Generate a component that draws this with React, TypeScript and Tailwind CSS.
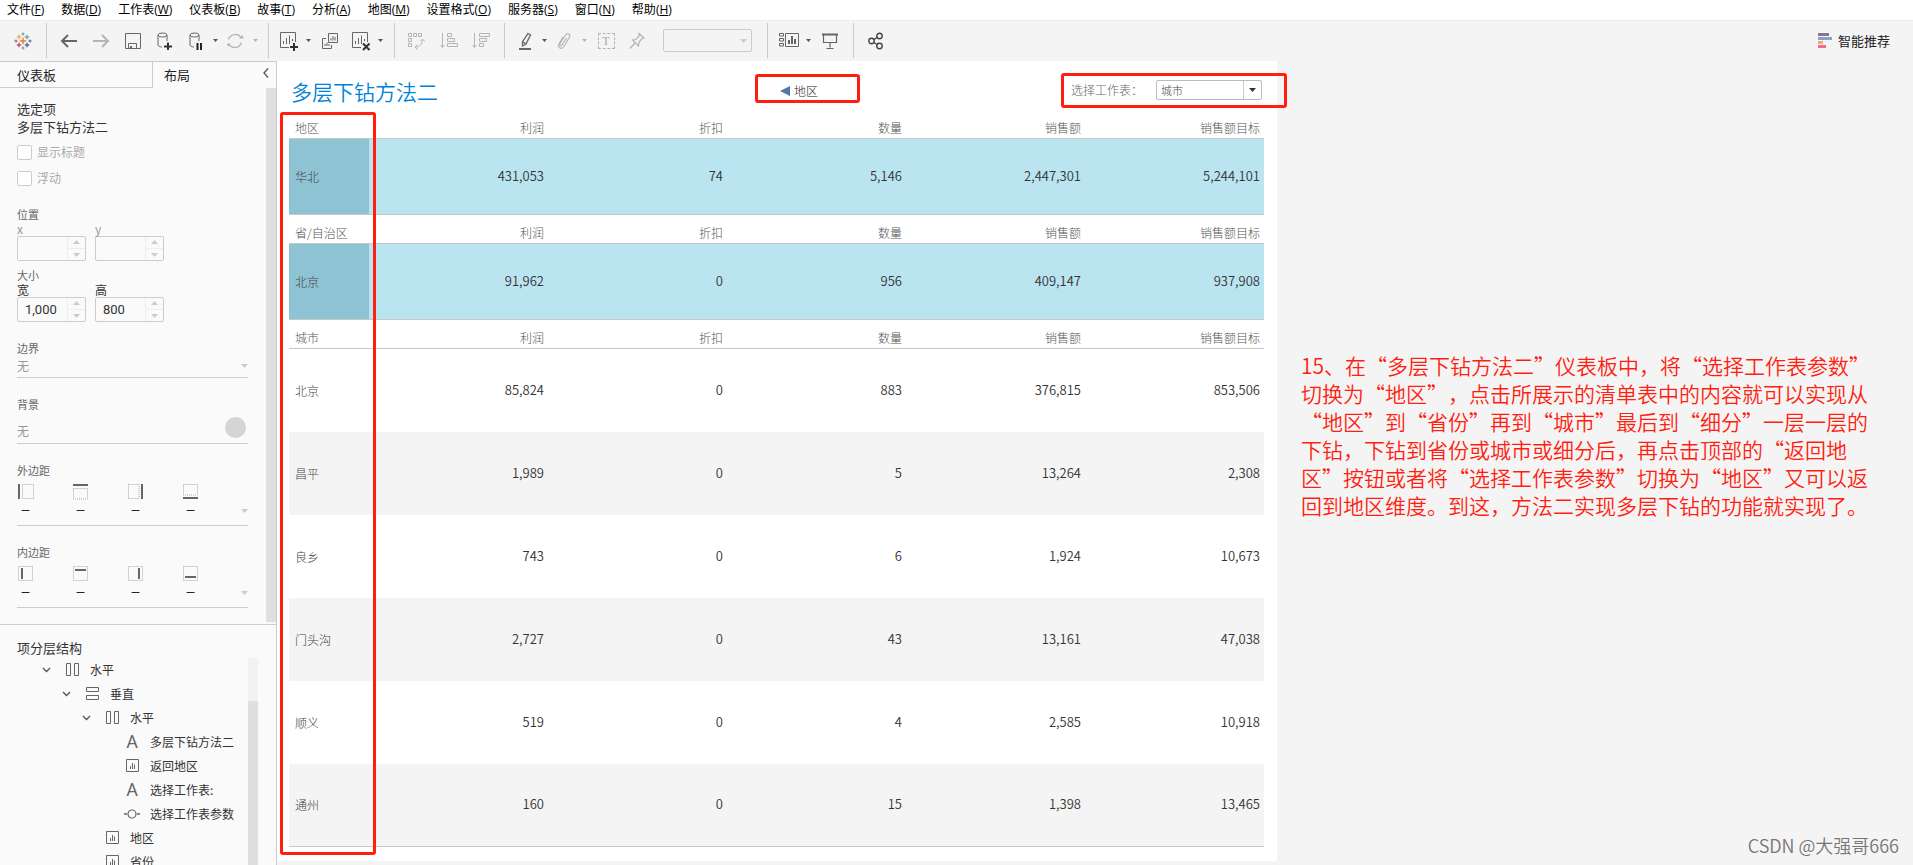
import React from "react";

const MENUS = [
    { label: "文件", key: "F" },
    { label: "数据", key: "D" },
    { label: "工作表", key: "W" },
    { label: "仪表板", key: "B" },
    { label: "故事", key: "T" },
    { label: "分析", key: "A" },
    { label: "地图", key: "M" },
    { label: "设置格式", key: "O" },
    { label: "服务器", key: "S" },
    { label: "窗口", key: "N" },
    { label: "帮助", key: "H" },
];

const MEASURES = ["利润", "折扣", "数量", "销售额", "销售额目标"];

type Row = { name: string; values: string[] };

const REGION_ROWS: Row[] = [{ name: "华北", values: ["431,053", "74", "5,146", "2,447,301", "5,244,101"] }];
const PROVINCE_ROWS: Row[] = [{ name: "北京", values: ["91,962", "0", "956", "409,147", "937,908"] }];
const CITY_ROWS: Row[] = [
    { name: "北京", values: ["85,824", "0", "883", "376,815", "853,506"] },
    { name: "昌平", values: ["1,989", "0", "5", "13,264", "2,308"] },
    { name: "良乡", values: ["743", "0", "6", "1,924", "10,673"] },
    { name: "门头沟", values: ["2,727", "0", "43", "13,161", "47,038"] },
    { name: "顺义", values: ["519", "0", "4", "2,585", "10,918"] },
    { name: "通州", values: ["160", "0", "15", "1,398", "13,465"] },
];

type TreeIcon = "horizontal" | "vertical" | "text" | "sheet" | "parameter";

const TREE: { label: string; icon: TreeIcon; indent: string; open?: boolean }[] = [
    { label: "水平", icon: "horizontal", indent: "pl-[23px]", open: true },
    { label: "垂直", icon: "vertical", indent: "pl-[43px]", open: true },
    { label: "水平", icon: "horizontal", indent: "pl-[63px]", open: true },
    { label: "多层下钻方法二", icon: "text", indent: "pl-[83px]" },
    { label: "返回地区", icon: "sheet", indent: "pl-[83px]" },
    { label: "选择工作表:", icon: "text", indent: "pl-[83px]" },
    { label: "选择工作表参数", icon: "parameter", indent: "pl-[83px]" },
    { label: "地区", icon: "sheet", indent: "pl-[63px]" },
    { label: "省份", icon: "sheet", indent: "pl-[63px]" },
];

const Svg = ({ children, className = "text-[#666]", size = 18 }: { children: React.ReactNode; className?: string; size?: number }) => (
    <svg width={size} height={size} viewBox={`0 0 ${size} ${size}`} fill="none" stroke="currentColor" className={`shrink-0 ${className}`}>
        {children}
    </svg>
);

const Caret = ({ className = "text-[#666]" }: { className?: string }) => (
    <svg width="7" height="4" viewBox="0 0 7 4" className={`shrink-0 ${className}`} fill="currentColor">
        <path d="M0 0h7L3.5 4z" />
    </svg>
);

const Tool = ({ name, children }: { name: string; children: React.ReactNode }) => (
    <button type="button" aria-label={name} className="flex h-8 w-8 items-center justify-center">
        {children}
    </button>
);

const SplitTool = ({ name, dim, children }: { name: string; dim?: boolean; children: React.ReactNode }) => (
    <div className="flex h-8 w-10">
        <button type="button" aria-label={name} className="flex w-[30px] items-center justify-center">
            {children}
        </button>
        <button type="button" aria-label={`${name}选项`} className="flex w-[9px] items-center justify-center">
            <svg width="5" height="3" viewBox="0 0 5 3" fill="currentColor" className={dim ? "text-[#b4b4b4]" : "text-[#555]"}>
                <path d="M0 0h5L2.5 3z" />
            </svg>
        </button>
    </div>
);

const LogoCross = ({ x, y, r, color }: { x: number; y: number; r: number; color: string }) => (
    <path d={`M${x - r} ${y}h${2 * r}M${x} ${y - r}v${2 * r}`} stroke={color} strokeWidth={r > 2.6 ? 1.4 : 1.1} />
);

const Logo = () => (
    <Svg>
        <LogoCross x={9} y={9} r={3.2} color="#eb7a2c" />
        <LogoCross x={5} y={5} r={2.3} color="#e8a33d" />
        <LogoCross x={13} y={5} r={2.3} color="#5b8f9e" />
        <LogoCross x={5} y={13} r={2.3} color="#c8233f" />
        <LogoCross x={13} y={13} r={2.3} color="#1f4b83" />
        <LogoCross x={9} y={2} r={1.6} color="#6f95a8" />
        <LogoCross x={9} y={16} r={1.6} color="#7a86b4" />
        <LogoCross x={2} y={9} r={1.6} color="#8a5f94" />
        <LogoCross x={16} y={9} r={1.6} color="#4f62a0" />
    </Svg>
);

const Toolbar = () => (
    <div className="flex h-[41px] shrink-0 items-center border-t border-[#ececec] bg-[#f4f4f4] pb-px">
        <div className="flex h-[35px] w-[47px] items-center justify-center border-r border-[#ccc]">
            <Logo />
        </div>
        <div className="flex h-[35px] items-center border-r border-[#ccc] pr-[7px] pl-[6px]">
            <Tool name="撤消">
                <Svg><path d="M17 9H2M8 3L2 9l6 6" strokeWidth="2" /></Svg>
            </Tool>
            <Tool name="重做">
                <Svg className="text-[#b4b4b4]"><path d="M1 9h15M10 3l6 6-6 6" strokeWidth="2" /></Svg>
            </Tool>
            <Tool name="保存">
                <Svg>
                    <path d="M1.5 1.5h15v15h-15z" />
                    <path d="M4.5 16.5v-5h8v5" />
                    <path d="M7 14v3" strokeWidth="2" />
                </Svg>
            </Tool>
            <Tool name="新建数据源">
                <Svg>
                    <ellipse cx="6.5" cy="3" rx="4.5" ry="2" />
                    <path d="M2 3v10c0 1.200 2 2 4 2M11 3v6" />
                    <path d="M8 14.500h8M12 10.500v8" className="text-[#333]" strokeWidth="2" />
                </Svg>
            </Tool>
            <SplitTool name="暂停自动更新">
                <Svg>
                    <ellipse cx="7.500" cy="3" rx="4.500" ry="2" />
                    <path d="M3 3v10c0 1.200 2 2 4 2M12 3v6" />
                    <path d="M10.500 11v7M14 11v7" className="text-[#222]" strokeWidth="2" />
                </Svg>
            </SplitTool>
            <SplitTool name="运行更新" dim>
                <Svg className="text-[#b4b4b4]">
                    <path d="M1.500 7.500A7 7 0 0 1 14 5.500M14.500 10.500A7 7 0 0 1 2 12.500" strokeWidth="1.300" />
                    <path d="M12 6.500h4.500L15.500 3z M4 11.500H0l1 3.500z" fill="currentColor" stroke="none" />
                </Svg>
            </SplitTool>
        </div>
        <div className="flex h-[35px] items-center border-r border-[#ccc] pr-2 pl-[5px]">
            <SplitTool name="新建工作表">
                <Svg size={20}>
                    <path d="M10 16.500H1.500v-15h15V11" />
                    <path d="M4.500 13V10M7.500 13V7M10.500 13V4.500M13.500 10V8" />
                    <path d="M11 16h8M15 12v8" className="text-[#333]" strokeWidth="2" />
                </Svg>
            </SplitTool>
            <Tool name="复制">
                <Svg>
                    <path d="M7.500 1.500h9v9h-9z" />
                    <path d="M5 6.500H1.500v10h9V13" />
                    <path d="M10 8.500V6M12 8.500V4M14 8.500V5M4 14v-2M6 14v-3.500M8 14v-2" />
                </Svg>
            </Tool>
            <SplitTool name="清除工作表">
                <Svg size={20}>
                    <path d="M10 16.500H1.500v-15h15V11" />
                    <path d="M4.500 13V10M7.500 13V7M10.500 13V4.500M13.500 10V8" />
                    <path d="M12 12.500l6.500 6.500M18.500 12.500L12 19" className="text-[#333]" strokeWidth="2" />
                </Svg>
            </SplitTool>
        </div>
        <div className="flex h-[35px] items-center border-r border-[#ccc] pr-[7px] pl-[6px]">
            <Tool name="交换行和列">
                <Svg className="text-[#b4b4b4]">
                    <path d="M.5 1.500h3v3h-3zM5.500 1.500h3v3h-3zM10.500 1.500h3v3h-3zM.5 6.500h3v3h-3zM.5 11.500h3v3h-3z" />
                    <path d="M14.500 8c0 4-2.500 7-7 7M12 9.500L14.500 7 17 9.500M9.500 12.500L7 15l2.500 2.500" />
                </Svg>
            </Tool>
            <Tool name="升序排序">
                <Svg className="text-[#b4b4b4]">
                    <path d="M2.500 1v14M.5 13l2 2.500 2-2.500M7.500 1.500h4v3h-4zM7.500 6.500h7v3h-7zM7.500 11.500h10v3h-10z" />
                </Svg>
            </Tool>
            <Tool name="降序排序">
                <Svg className="text-[#b4b4b4]">
                    <path d="M2.500 1v14M.5 13l2 2.500 2-2.500M7.500 1.500h10v3h-10zM7.500 6.500h7v3h-7zM7.500 11.500h4v3h-4z" />
                </Svg>
            </Tool>
        </div>
        <div className="flex h-[35px] items-center border-r border-[#ccc] pr-[15px] pl-[5px]">
            <SplitTool name="突出显示">
                <Svg>
                    <path d="M12 1.500l2.500 1.500-4.500 9-3.500 2V10z M7 10l3 2" strokeWidth="1.300" />
                    <path d="M3 17h12" strokeWidth="2" />
                </Svg>
            </SplitTool>
            <SplitTool name="组成员" dim>
                <Svg className="text-[#b4b4b4]">
                    <path d="M10.500 6L6 13c-1 1.500-3 .500-2-1.500L9.500 3c1.500-2.500 5.500-1 4 2L8 14.500c-2.500 3.500-7 1-5-2.500L7 5" strokeWidth="1.200" />
                </Svg>
            </SplitTool>
            <Tool name="显示标记标签">
                <span className="flex h-4 w-[17px] items-center justify-center border border-dashed border-[#b4b4b4] font-['Liberation_Serif',serif] text-[12px] text-[#aaa]">
                    T
                </span>
            </Tool>
            <Tool name="固定轴">
                <Svg className="text-[#b4b4b4]">
                    <path d="M10 1.500l5 4.500-2 .5-3 3.500-.5 4-6-6 3.500-.5L10 4zM6 11l-5 5.500" strokeWidth="1.200" />
                </Svg>
            </Tool>
            <div className="relative ml-[9px]">
                <select aria-label="适合" disabled className="block h-[23px] w-[89px] appearance-none rounded-[2px] border border-[#ccc]">
                    <option></option>
                </select>
                <Caret className="pointer-events-none absolute top-[10px] right-[5px] text-[#ccc]" />
            </div>
        </div>
        <div className="flex h-[35px] items-center border-r border-[#ccc] pr-[7px] pl-[6px]">
            <SplitTool name="显示/隐藏卡">
                <Svg size={20}>
                    <path d="M.5 2.500h4v2.500h-4zM.5 7.500h4V10h-4zM.5 12.500h4V15h-4zM6.500 2.500h13v13h-13z" />
                    <path d="M10 13v-4M13 13V5M16 13V8" strokeWidth="2" />
                </Svg>
            </SplitTool>
            <Tool name="演示模式">
                <Svg>
                    <path d="M1 2.500h16" strokeWidth="2" />
                    <path d="M2.500 3v7.500h13V3M9 10.500v5M5.500 16.500h7" strokeWidth="1.200" />
                </Svg>
            </Tool>
        </div>
        <div className="flex items-center pl-[6px]">
            <Tool name="共享">
                <Svg className="text-[#444]">
                    <circle cx="4.500" cy="9" r="2.700" strokeWidth="1.400" />
                    <circle cx="12.500" cy="4" r="2.700" strokeWidth="1.400" />
                    <circle cx="12.500" cy="14" r="2.700" strokeWidth="1.400" />
                    <path d="M6.800 7.500l3.400-2M6.800 10.500l3.400 2" strokeWidth="1.400" />
                </Svg>
            </Tool>
        </div>
        <button type="button" className="mr-[23px] ml-auto flex items-center gap-[6px] text-[13px] leading-5 text-[#222]">
            <svg width="14" height="15" viewBox="0 0 14 15">
                <path d="M0 0h11v3H0z" fill="#8b7496" />
                <path d="M0 4h14v3H0z" fill="#82a5cb" />
                <path d="M0 8h5v3H0z" fill="#f2a77c" />
                <path d="M0 12h8v3H0z" fill="#f36c7e" />
            </svg>
            智能推荐
        </button>
    </div>
);

const Stepper = ({ id, label, value, dim }: { id: string; label: string; value: string; dim?: boolean }) => (
    <div className="w-[69px]">
        <label htmlFor={id} className={`block text-[12px] leading-[14px] ${dim ? "text-[#999]" : "text-[#333]"}`}>
            {label}
        </label>
        <div className="flex h-[25px] rounded-[2px] border border-[#ccc]">
            <input
                id={id}
                type="text"
                defaultValue={value}
                className="w-[49px] min-w-0 pl-[7px] font-['Roboto',sans-serif] text-[13px] text-[#333]"
            />
            <div className="flex flex-1 flex-col border-l border-[#eee]">
                <button type="button" aria-label={`${label} 增加`} className="flex flex-1 rotate-180 items-center justify-center border-t border-[#eee]">
                    <Caret className="text-[#ccc]" />
                </button>
                <button type="button" aria-label={`${label} 减少`} className="flex flex-1 items-center justify-center">
                    <Caret className="text-[#ccc]" />
                </button>
            </div>
        </div>
    </div>
);

const OUTER = [
    { side: "左", box: "M4.500.500h11v14h-11z", bar: "M1 0v15" },
    { side: "上", box: "M.5 4.500h14v10.500H.500z", bar: "M0 1h15" },
    { side: "右", box: "M.5.500h10.500v14H.500z", bar: "M14 0v15" },
    { side: "下", box: "M.5.500h14v10.500H.500z", bar: "M0 14h15" },
];

const INNER = [
    { side: "左", box: "M.5.500h14v14H.500z", bar: "M4 2v11" },
    { side: "上", box: "M.5.500h14v14H.500z", bar: "M2 4h11" },
    { side: "右", box: "M.5.500h14v14H.500z", bar: "M11 2v11" },
    { side: "下", box: "M.5.500h14v14H.500z", bar: "M2 11h11" },
];

const Spacing = ({ title, sides }: { title: string; sides: typeof OUTER }) => (
    <div className="mt-[18px]">
        <div className="text-[11px] leading-4 text-[#666]">{title}</div>
        <div className="mt-[6px] flex items-end border-b border-[#ccc] pb-[3px]">
            {sides.map((s) => (
                <div key={s.side} className="w-[55px] pl-px">
                    <svg width="16" height="16" viewBox="0 0 16 16" fill="none" className="block">
                        <path d={s.box} stroke="#aaa" strokeDasharray="1 1" />
                        <path d={s.bar} stroke="#666" strokeWidth="2" />
                    </svg>
                    <div className="w-[15px] text-center font-['Roboto',sans-serif] text-[12px] leading-[22px] text-[#222]">—</div>
                </div>
            ))}
            <button type="button" aria-label={`${title}选项`} className="ml-auto flex h-[22px] items-center">
                <Caret className="text-[#ccc]" />
            </button>
        </div>
    </div>
);

const LayoutPane = () => (
    <div className="min-w-0 flex-1 pt-3 pr-[18px] pb-4 pl-[17px]">
        <div className="text-[13px] leading-[18px] text-[#333]">选定项</div>
        <div className="text-[13px] leading-[18px] text-[#333]">多层下钻方法二</div>

        <label className="mt-2 flex h-4 items-center gap-[5px] text-[12px] text-[#aaa]">
            <input type="checkbox" className="size-[15px] appearance-none rounded-[2px] border border-[#ccc] bg-white" />
            显示标题
        </label>
        <label className="mt-[10px] flex h-4 items-center gap-[5px] text-[12px] text-[#aaa]">
            <input type="checkbox" className="size-[15px] appearance-none rounded-[2px] border border-[#ccc] bg-white" />
            浮动
        </label>

        <div className="mt-5 text-[11px] leading-4 text-[#666]">位置</div>
        <div className="flex gap-[9px]">
            <Stepper id="pos-x" label="x" value="" dim />
            <Stepper id="pos-y" label="y" value="" dim />
        </div>
        <div className="mt-[6px] text-[11px] leading-4 text-[#666]">大小</div>
        <div className="flex gap-[9px]">
            <Stepper id="size-w" label="宽" value="1,000" />
            <Stepper id="size-h" label="高" value="800" />
        </div>

        <label htmlFor="border" className="mt-[18px] block text-[11px] leading-4 text-[#666]">边界</label>
        <div className="flex h-[22px] items-center border-b border-[#ccc] pb-px">
            <select id="border" className="h-5 flex-1 appearance-none text-[12px] text-[#999]">
                <option>无</option>
            </select>
            <Caret className="text-[#ccc]" />
        </div>

        <label htmlFor="background" className="mt-[18px] block text-[11px] leading-4 text-[#666]">背景</label>
        <div className="flex h-8 items-center border-b border-[#ccc] pr-[2px]">
            <select id="background" className="h-6 flex-1 appearance-none pt-[6px] text-[12px] leading-[18px] text-[#999]">
                <option>无</option>
            </select>
            <span className="size-[21px] rounded-full bg-[#d4d4d4]" />
        </div>

        <Spacing title="外边距" sides={OUTER} />
        <Spacing title="内边距" sides={INNER} />
    </div>
);

const TreeGlyph = ({ icon }: { icon: TreeIcon }) => {
    if (icon === "text") {
        return <span className="w-[18px] text-center font-['Roboto',sans-serif] text-[18px] leading-5 text-[#666]">A</span>;
    }
    return (
        <Svg>
            {icon === "horizontal" && <path d="M3.500 2.500h4v12h-4zM11.500 2.500h4v12h-4z" />}
            {icon === "vertical" && <path d="M3.500 2.500h12v4h-12zM3.500 10.500h12v4h-12z" />}
            {icon === "sheet" && <path d="M3.500 2.500h12v12h-12zM7.500 12V9M9.500 12V6M11.500 12V7.500" />}
            {icon === "parameter" && (
                <>
                    <circle cx="9" cy="9" r="4" strokeWidth="1.200" />
                    <path d="M1 9h3M14 9h3" strokeWidth="1.500" />
                </>
            )}
        </Svg>
    );
};

const Sidebar = () => (
    <aside className="flex w-[277px] shrink-0 flex-col border-t border-r border-[#ccc] bg-[#fafafa]">
        <div className="flex h-[26px] shrink-0 text-[13px] text-[#222]">
            <button type="button" className="w-[153px] border-r border-b border-[#ccc] pl-[17px] text-left">仪表板</button>
            <button type="button" className="pb-px pl-[11px]">布局</button>
            <button type="button" aria-label="折叠" className="mr-[7px] ml-auto flex items-center pb-1 text-[#555]">
                <svg width="6" height="10" viewBox="0 0 6 10" fill="none" stroke="currentColor" strokeWidth="1.300">
                    <path d="M5 .5L1 5l4 4.500" />
                </svg>
            </button>
        </div>
        <div className="flex shrink-0 border-b border-[#ccc]">
            <LayoutPane />
            <div className="mb-[2px] w-[10px] bg-[#dfdfdf]" />
        </div>
        <div className="flex min-h-0 flex-1 flex-col pt-[13px] pl-[17px]">
            <div className="shrink-0 text-[13px] leading-5 text-[#333]">项分层结构</div>
            <div className="flex min-h-0 flex-1 overflow-hidden">
                <ul className="flex-1">
                    {TREE.map((node, i) => (
                        <li key={i} className={`flex h-6 items-center text-[12px] whitespace-nowrap text-[#333] ${node.indent}`}>
                            <span className="w-[23px] text-[#555]">
                                {node.open && (
                                    <svg width="14" height="8" viewBox="0 0 14 8" fill="none" stroke="currentColor" strokeWidth="1.300">
                                        <path d="M3 2l3.500 3.500L10 2" />
                                    </svg>
                                )}
                            </span>
                            <TreeGlyph icon={node.icon} />
                            <span className="ml-[9px]">{node.label}</span>
                        </li>
                    ))}
                </ul>
                <div className="mr-[18px] w-[10px] bg-[#f2f2f2] pt-[43px]">
                    <div className="h-full bg-[#dfdfdf]" />
                </div>
            </div>
        </div>
    </aside>
);

const DataTable = ({ title, rows, selected }: { title: string; rows: Row[]; selected?: boolean }) => (
    <table className="w-full table-fixed border-separate border-spacing-0 text-[#333]">
        <thead>
            <tr className="h-[29px] text-[12px] leading-[18px] text-[#555]">
                <th className="w-20 border-b border-[#c8c8c8] pb-px pl-[6px] text-left align-bottom font-light whitespace-nowrap">{title}</th>
                {MEASURES.map((m) => (
                    <th key={m} className="border-b border-[#c8c8c8] pr-1 pb-px text-right align-bottom font-light">{m}</th>
                ))}
            </tr>
        </thead>
        <tbody>
            {rows.map((row, i) => (
                <tr
                    key={row.name}
                    className={`${selected ? "h-[76px] bg-[#bbe4f1]" : "h-[83px]"} ${!selected && i % 2 === 1 ? "bg-[#f4f4f4]" : ""}`}
                >
                    <th
                        className={`pl-[6px] text-left text-[12px] font-light text-[#444] ${selected ? "bg-[#8dc3d2]" : ""} ${i === rows.length - 1 ? "border-b border-[#c8c8c8]" : ""}`}
                    >
                        {row.name}
                    </th>
                    {row.values.map((v, j) => (
                        <td key={j} className={`pr-1 pb-[2px] text-right text-[13px] font-[350] ${i === rows.length - 1 ? "border-b border-[#c8c8c8]" : ""}`}>
                            {v}
                        </td>
                    ))}
                </tr>
            ))}
        </tbody>
    </table>
);

const Dashboard = () => (
    <section className="relative mb-1 flex-[1000] bg-white">
        <header className="grid h-[49px] grid-cols-[503fr_291fr_206fr] pt-2">
            <h1 className="pl-[14px] text-[21px] leading-[44px] font-[350] text-[#0082d8]">多层下钻方法二</h1>
            <button type="button" className="flex h-11 items-center gap-1 text-[12px] font-light text-[#222]">
                <svg width="10" height="10" viewBox="0 0 10 10" fill="#4e79a7">
                    <path d="M10 0v10L0 5z" />
                </svg>
                地区
            </button>
            <div className="flex h-[42px] items-center">
                <label htmlFor="sheet-param" className="w-[85px] text-[12px] font-light whitespace-nowrap text-[#666]">选择工作表：</label>
                <div className="relative">
                    <select
                        id="sheet-param"
                        className="block h-5 w-[106px] appearance-none rounded-[2px] border border-[#bbb] bg-white pl-1 text-[11px] leading-[18px] font-light text-[#444]"
                    >
                        <option>城市</option>
                    </select>
                    <span className="pointer-events-none absolute inset-y-px right-px flex w-[18px] items-center justify-center border-l border-[#ccc]">
                        <Caret className="text-[#333]" />
                    </span>
                </div>
            </div>
        </header>
        <div className="pr-[13px] pl-3">
            <DataTable title="地区" rows={REGION_ROWS} selected />
            <DataTable title="省/自治区" rows={PROVINCE_ROWS} selected />
            <DataTable title="城市" rows={CITY_ROWS} />
        </div>

        {/* callouts */}
        <div className="pointer-events-none absolute top-[51px] bottom-[6px] left-[3px] w-24 rounded-[3px] border-3 border-[#ff1e10]" />
        <div className="pointer-events-none absolute top-[13px] left-[478px] h-[29px] w-[105px] rounded-[3px] border-3 border-[#ff1e10]" />
        <div className="pointer-events-none absolute top-3 -right-[10px] h-[35px] w-[226px] rounded-[3px] border-3 border-[#ff1e10]" />
    </section>
);

export default function App() {
    return (
        <div lang="zh-CN" className="flex h-screen flex-col overflow-hidden bg-[#f4f4f4] font-['Noto_Sans_CJK_SC',sans-serif]">
            <nav className="flex h-5 shrink-0 bg-white font-['Open_Sans','Noto_Sans_CJK_SC',sans-serif] text-[12px] leading-4 text-black">
                {MENUS.map((m) => (
                    <button key={m.key} type="button" className="pr-[10px] pl-[7px] whitespace-nowrap">
                        {m.label}(<u>{m.key}</u>)
                    </button>
                ))}
            </nav>
            <Toolbar />
            <div className="flex min-h-0 flex-1">
                <Sidebar />
                <main className="flex min-w-0 flex-1">
                    <Dashboard />
                    <div className="flex flex-[636] flex-col justify-between">
                        <p className="pt-[290px] pl-6 text-[21px] leading-7 font-[350] whitespace-nowrap text-[#ff1e10] [text-spacing-trim:space-all]">
                            15、在“多层下钻方法二”仪表板中，将“选择工作表参数”
                            <br />
                            切换为“地区”，点击所展示的清单表中的内容就可以实现从
                            <br />
                            “地区”到“省份”再到“城市”最后到“细分”一层一层的
                            <br />
                            下钻，下钻到省份或城市或细分后，再点击顶部的“返回地
                            <br />
                            区”按钮或者将“选择工作表参数”切换为“地区”又可以返
                            <br />
                            回到地区维度。到这，方法二实现多层下钻的功能就实现了。
                        </p>
                        <div className="pr-[14px] pb-[6px] text-right text-[18px] leading-7 font-[350] text-[#777]">CSDN @大强哥666</div>
                    </div>
                </main>
            </div>
        </div>
    );
}
